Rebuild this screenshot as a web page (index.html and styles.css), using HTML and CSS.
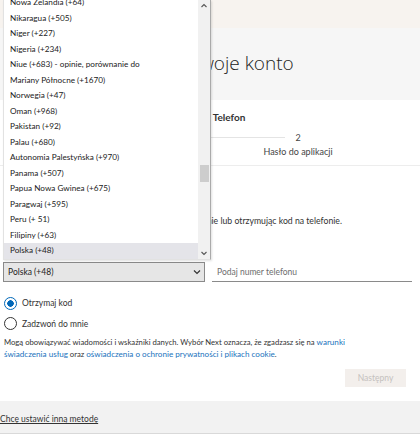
FILE: index.html
```html
<!DOCTYPE html>
<html lang="pl">
<head>
    <meta charset="UTF-8">
    <meta name="viewport" content="width=device-width, initial-scale=1.0">
    <title>Zabezpiecz swoje konto</title>
    <link rel="stylesheet" href="styles.css">
</head>
<body>

    <div class="topbar"></div>

    <div class="title-band">
        <h1>Zabezpiecz swoje konto</h1>
    </div>

    <div class="steps-box">
        <p class="method">Metoda 2: Telefon</p>
        <div class="steps">
            <div class="step">
                <div class="step-head">
                    <span class="bar off"></span>
                    <span class="num">1</span>
                    <span class="bar"></span>
                </div>
                <span class="step-name">Telefon</span>
            </div>
            <div class="step">
                <div class="step-head">
                    <span class="bar"></span>
                    <span class="num">2</span>
                    <span class="bar off"></span>
                </div>
                <span class="step-name">Hasło do aplikacji</span>
            </div>
        </div>
    </div>

    <div class="content">
        <h2>Telefon</h2>
        <p class="lead">Potwierdź tożsamość, odbierając połączenie na telefonie lub otrzymując kod na telefonie.</p>
        <p class="question">Jakiego numeru telefonu chcesz użyć?</p>

        <div class="phone-row">
            <div class="country-select">
                <span>Polska (+48)</span>
                <svg width="8" height="6" viewBox="0 0 8 6"><path d="M1 1.5 L4 4.5 L7 1.5" fill="none" stroke="#333" stroke-width="1.2"/></svg>
            </div>
            <input type="text" class="phone-input" placeholder="Podaj numer telefonu">
        </div>

        <label class="choice">
            <span class="radio checked"></span>
            Otrzymaj kod
        </label>
        <label class="choice">
            <span class="radio"></span>
            Zadzwoń do mnie
        </label>

        <p class="terms">Mogą obowiązywać wiadomości i wskaźniki danych. Wybór Next oznacza, że zgadzasz się na <a href="#">warunki świadczenia usług</a> oraz <a href="#">oświadczenia o ochronie prywatności i plikach cookie</a>.</p>

        <div class="actions">
            <button type="button" class="next" disabled>Następny</button>
        </div>
    </div>

    <div class="footer">
        <a href="#">Chcę ustawić inną metodę</a>
    </div>

    <!-- open country dropdown -->
    <div class="country-list">
        <ul class="options">
            <li>Nowa Zelandia (+64)</li>
            <li>Nikaragua (+505)</li>
            <li>Niger (+227)</li>
            <li>Nigeria (+234)</li>
            <li>Niue (+683) - opinie, porównanie do</li>
            <li>Mariany Północne (+1670)</li>
            <li>Norwegia (+47)</li>
            <li>Oman (+968)</li>
            <li>Pakistan (+92)</li>
            <li>Palau (+680)</li>
            <li>Autonomia Palestyńska (+970)</li>
            <li>Panama (+507)</li>
            <li>Papua Nowa Gwinea (+675)</li>
            <li>Paragwaj (+595)</li>
            <li>Peru (+ 51)</li>
            <li>Filipiny (+63)</li>
            <li class="selected">Polska (+48)</li>
        </ul>
        <div class="scrollbar">
            <svg class="arrow" width="12" height="12" viewBox="0 0 12 12"><path d="M3.5 7 L6 4.5 L8.5 7" fill="none" stroke="#555" stroke-width="1.1"/></svg>
            <div class="track"><div class="thumb"></div></div>
            <svg class="arrow" width="12" height="12" viewBox="0 0 12 12"><path d="M3.5 5 L6 7.5 L8.5 5" fill="none" stroke="#555" stroke-width="1.1"/></svg>
        </div>
    </div>

</body>
</html>
```

FILE: styles.css
```css
body {
    margin: 0;
    width: 420px;
    height: 439px;
    overflow: hidden;
    position: relative;
    font-family: Lato, "Open Sans", sans-serif;
    color: #1b1b1b;
    background: #fff;
}
.topbar {
    height: 28px;
    background: #f7f3ef;
}
.title-band {
    height: 72px;
    background: #f6f6f6;
}
.title-band h1 {
    margin: 0;
    padding: 22px 0 0 91px;
    font-family: "Open Sans", sans-serif;
    font-size: 19px;
    font-weight: 300;
    line-height: 26px;
    color: #222;
}
.steps-box {
    height: 65px;
    border-bottom: 1px solid #ededed;
}
.method {
    margin: 0;
    padding: 11px 0 0 165px;
    font-size: 10px;
    font-weight: 700;
    line-height: 12px;
    color: #333;
}
.steps {
    display: flex;
    margin: 8px 0 0 118px;
}
.step {
    width: 120px;
}
.step-head {
    display: flex;
    align-items: center;
    height: 12px;
}
.bar {
    flex: 1;
    height: 1px;
    background: #e4e4e4;
}
.bar.off {
    visibility: hidden;
}
.num {
    margin: 0 10px;
    font-size: 9px;
    color: #444;
}
.step-name {
    display: block;
    margin-top: 3px;
    text-align: center;
    font-size: 9px;
    line-height: 12px;
    color: #444;
}
.content {
    padding: 0 4px;
}
.content h2 {
    margin: 18px 0 0;
    font-size: 14px;
    line-height: 18px;
    font-weight: 600;
}
.lead {
    margin: 13px 0 0;
    font-size: 8.7px;
    line-height: 12px;
    color: #333;
}
.question {
    margin: 9px 0 0;
    font-size: 8.5px;
    line-height: 12px;
    color: #333;
}
.phone-row {
    display: flex;
    margin-top: 14px;
    height: 20px;
}
.country-select {
    box-sizing: border-box;
    width: 202px;
    margin-left: -1px;
    padding: 0 3px 0 4px;
    display: flex;
    align-items: center;
    justify-content: space-between;
    border: 1px solid #8a8a8a;
    background: #e6e6e6;
    font-size: 8.5px;
    color: #222;
}
.phone-input {
    box-sizing: border-box;
    width: 200px;
    height: 20px;
    margin-left: 7px;
    padding: 0 5px;
    border: 0;
    border-bottom: 1px solid #8a8a8a;
    background: transparent;
    font: inherit;
    font-size: 8.5px;
    outline: none;
}
.phone-input::placeholder {
    color: #6e6e6e;
}
.choice {
    display: flex;
    align-items: center;
    gap: 5px;
    height: 20.5px;
    font-size: 8.5px;
    color: #333;
}
.phone-row + .choice {
    margin-top: 11px;
}
.radio {
    box-sizing: border-box;
    width: 13px;
    height: 13px;
    border: 1px solid #333;
    border-radius: 50%;
}
.radio.checked {
    border-color: #0067b8;
    background: radial-gradient(circle, #0067b8 0 3px, #fff 3.5px);
}
.terms {
    max-width: 378px;
    margin: 3px 0 0;
    font-size: 7.7px;
    line-height: 11.5px;
    color: #333;
}
.terms a {
    font-size: 8.1px;
    color: #1a73bd;
    text-decoration: none;
}
.actions {
    display: flex;
    justify-content: flex-end;
    margin-top: 9px;
}
.next {
    width: 61px;
    height: 18px;
    margin-right: 10px;
    border: 0;
    background: #f3efec;
    color: #c4c1be;
    font: inherit;
    font-size: 8.5px;
}
.footer {
    box-sizing: border-box;
    height: 33px;
    margin-top: 14px;
    padding-top: 12px;
    background: #f2f2f2;
    border-bottom: 1px solid #d9d9d9;
    font-size: 8.5px;
    line-height: 12px;
}
.footer a {
    color: #333;
}
.country-list {
    position: absolute;
    left: 3px;
    top: 0;
    box-sizing: border-box;
    width: 208px;
    height: 260px;
    display: flex;
    overflow: hidden;
    background: #fff;
    border: 1px solid #e2e2e2;
    border-top: 0;
    border-right-color: #aaa;
    box-shadow: 1px 1px 2px rgba(0, 0, 0, 0.12);
}
.options {
    flex: 1;
    margin: -5px 0 0;
    padding: 0;
    list-style: none;
}
.options li {
    height: 15.5px;
    line-height: 15.5px;
    padding-left: 6px;
    font-size: 8.2px;
    color: #222;
    white-space: nowrap;
}
.options li.selected {
    background: #e4e4e9;
}
.scrollbar {
    width: 12px;
    display: flex;
    flex-direction: column;
    background: #f1f1f1;
}
.arrow {
    display: block;
    flex: none;
}
.track {
    flex: 1;
}
.thumb {
    width: 9px;
    height: 17px;
    margin: 153px auto 0;
    background: #cdcdcd;
}
```
